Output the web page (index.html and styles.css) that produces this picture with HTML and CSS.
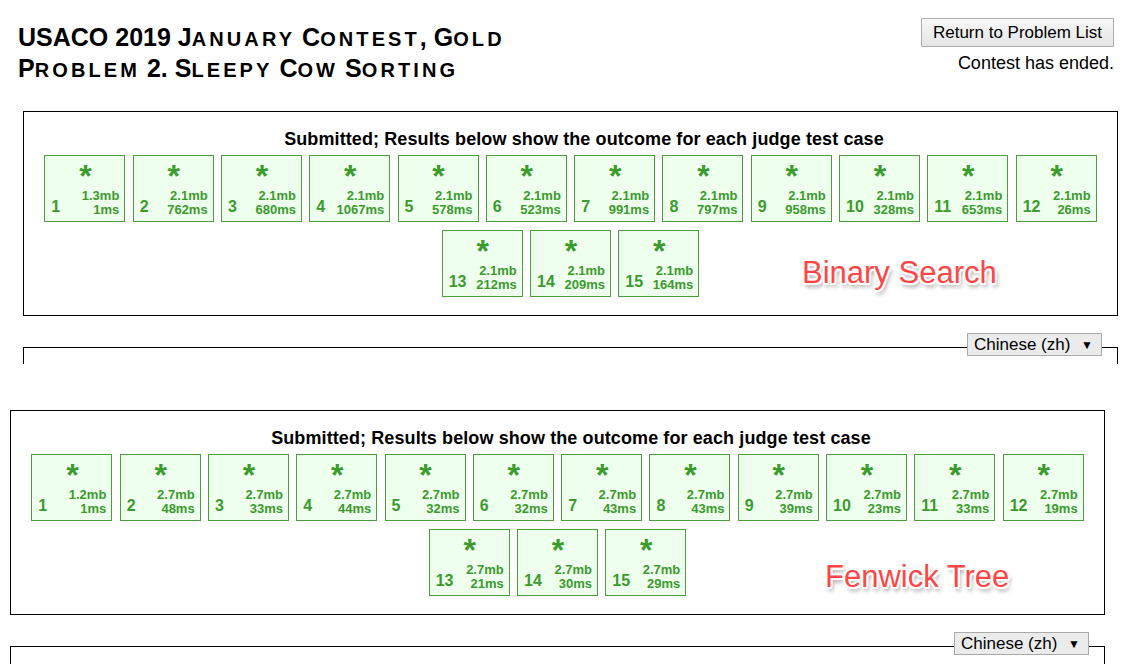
FILE: index.html
```html
<!DOCTYPE html>
<html>
<head>
<meta charset="utf-8">
<title>USACO 2019 January Contest, Gold</title>
<link rel="stylesheet" href="styles.css">
</head>
<body>
<div class="shot shot-one">
  <header class="topbar">
    <h2 class="title">USACO 2019 J<span class="sc">anuary</span> C<span class="sc">ontest</span>, G<span class="sc">old</span><br>P<span class="sc">roblem</span> 2. S<span class="sc">leepy</span> C<span class="sc">ow</span> S<span class="sc">orting</span></h2>
    <div class="actions">
      <button class="btn" type="button">Return to Problem List</button>
      <div class="status">Contest has ended.</div>
    </div>
  </header>
  <section class="results results-one">
    <h3 class="results-head">Submitted; Results below show the outcome for each judge test case</h3>
    <div class="cases">
      <div class="case"><div class="star">*</div><div class="foot"><span class="num">1</span><div class="info"><span>1.3mb</span><span>1ms</span></div></div></div>
      <div class="case"><div class="star">*</div><div class="foot"><span class="num">2</span><div class="info"><span>2.1mb</span><span>762ms</span></div></div></div>
      <div class="case"><div class="star">*</div><div class="foot"><span class="num">3</span><div class="info"><span>2.1mb</span><span>680ms</span></div></div></div>
      <div class="case"><div class="star">*</div><div class="foot"><span class="num">4</span><div class="info"><span>2.1mb</span><span>1067ms</span></div></div></div>
      <div class="case"><div class="star">*</div><div class="foot"><span class="num">5</span><div class="info"><span>2.1mb</span><span>578ms</span></div></div></div>
      <div class="case"><div class="star">*</div><div class="foot"><span class="num">6</span><div class="info"><span>2.1mb</span><span>523ms</span></div></div></div>
      <div class="case"><div class="star">*</div><div class="foot"><span class="num">7</span><div class="info"><span>2.1mb</span><span>991ms</span></div></div></div>
      <div class="case"><div class="star">*</div><div class="foot"><span class="num">8</span><div class="info"><span>2.1mb</span><span>797ms</span></div></div></div>
      <div class="case"><div class="star">*</div><div class="foot"><span class="num">9</span><div class="info"><span>2.1mb</span><span>958ms</span></div></div></div>
      <div class="case"><div class="star">*</div><div class="foot"><span class="num">10</span><div class="info"><span>2.1mb</span><span>328ms</span></div></div></div>
      <div class="case"><div class="star">*</div><div class="foot"><span class="num">11</span><div class="info"><span>2.1mb</span><span>653ms</span></div></div></div>
      <div class="case"><div class="star">*</div><div class="foot"><span class="num">12</span><div class="info"><span>2.1mb</span><span>26ms</span></div></div></div>
      <div class="case"><div class="star">*</div><div class="foot"><span class="num">13</span><div class="info"><span>2.1mb</span><span>212ms</span></div></div></div>
      <div class="case"><div class="star">*</div><div class="foot"><span class="num">14</span><div class="info"><span>2.1mb</span><span>209ms</span></div></div></div>
      <div class="case"><div class="star">*</div><div class="foot"><span class="num">15</span><div class="info"><span>2.1mb</span><span>164ms</span></div></div></div>
    </div>
    <div class="note note-binary">Binary Search</div>
  </section>
  <fieldset class="lang lang-one">
    <legend class="lang-legend"><span class="lang-select"><span>Chinese (zh)</span><span class="arrow">▼</span></span></legend>
  </fieldset>
</div>

<div class="shot shot-two">
  <section class="results results-two">
    <h3 class="results-head">Submitted; Results below show the outcome for each judge test case</h3>
    <div class="cases">
      <div class="case"><div class="star">*</div><div class="foot"><span class="num">1</span><div class="info"><span>1.2mb</span><span>1ms</span></div></div></div>
      <div class="case"><div class="star">*</div><div class="foot"><span class="num">2</span><div class="info"><span>2.7mb</span><span>48ms</span></div></div></div>
      <div class="case"><div class="star">*</div><div class="foot"><span class="num">3</span><div class="info"><span>2.7mb</span><span>33ms</span></div></div></div>
      <div class="case"><div class="star">*</div><div class="foot"><span class="num">4</span><div class="info"><span>2.7mb</span><span>44ms</span></div></div></div>
      <div class="case"><div class="star">*</div><div class="foot"><span class="num">5</span><div class="info"><span>2.7mb</span><span>32ms</span></div></div></div>
      <div class="case"><div class="star">*</div><div class="foot"><span class="num">6</span><div class="info"><span>2.7mb</span><span>32ms</span></div></div></div>
      <div class="case"><div class="star">*</div><div class="foot"><span class="num">7</span><div class="info"><span>2.7mb</span><span>43ms</span></div></div></div>
      <div class="case"><div class="star">*</div><div class="foot"><span class="num">8</span><div class="info"><span>2.7mb</span><span>43ms</span></div></div></div>
      <div class="case"><div class="star">*</div><div class="foot"><span class="num">9</span><div class="info"><span>2.7mb</span><span>39ms</span></div></div></div>
      <div class="case"><div class="star">*</div><div class="foot"><span class="num">10</span><div class="info"><span>2.7mb</span><span>23ms</span></div></div></div>
      <div class="case"><div class="star">*</div><div class="foot"><span class="num">11</span><div class="info"><span>2.7mb</span><span>33ms</span></div></div></div>
      <div class="case"><div class="star">*</div><div class="foot"><span class="num">12</span><div class="info"><span>2.7mb</span><span>19ms</span></div></div></div>
      <div class="case"><div class="star">*</div><div class="foot"><span class="num">13</span><div class="info"><span>2.7mb</span><span>21ms</span></div></div></div>
      <div class="case"><div class="star">*</div><div class="foot"><span class="num">14</span><div class="info"><span>2.7mb</span><span>30ms</span></div></div></div>
      <div class="case"><div class="star">*</div><div class="foot"><span class="num">15</span><div class="info"><span>2.7mb</span><span>29ms</span></div></div></div>
    </div>
    <div class="note note-fenwick">Fenwick Tree</div>
  </section>
  <fieldset class="lang lang-two">
    <legend class="lang-legend"><span class="lang-select"><span>Chinese (zh)</span><span class="arrow">▼</span></span></legend>
  </fieldset>
</div>
</body>
</html>
```

FILE: styles.css
```css
html, body {
  margin: 0;
  padding: 0;
  background: #fff;
}

body {
  font-family: "Liberation Sans", Arial, sans-serif;
  color: #000;
  width: 1145px;
  height: 664px;
  overflow: hidden;
}

.shot {
  overflow: hidden;
}

.shot-one {
  height: 364px;
}

.shot-two {
  margin-top: 46px;
  height: 254px;
}

/* header */
.topbar {
  box-sizing: border-box;
  height: 111px;
  padding: 18px 31px 0 18px;
  display: flex;
  justify-content: space-between;
  align-items: flex-start;
}

.title {
  margin: 5px 0 0 0;
  font-size: 25px;
  line-height: 29px;
  font-weight: bold;
  white-space: nowrap;
}

.sc {
  text-transform: uppercase;
  font-size: 0.8em;
  letter-spacing: 3.1px;
}

.actions {
  display: flex;
  flex-direction: column;
  align-items: flex-end;
}

.btn {
  box-sizing: border-box;
  height: 29px;
  width: 193px;
  margin: 0;
  padding: 0 8px;
  font-family: "Liberation Sans", Arial, sans-serif;
  font-size: 17px;
  color: #000;
  border: 1px solid #adadad;
  border-radius: 1px;
  background: linear-gradient(#f7f7f7, #e5e5e5);
}

.status {
  margin-top: 6px;
  font-size: 18px;
  line-height: 20px;
}

/* result box */
.results {
  position: relative;
  box-sizing: border-box;
  width: 1095px;
  height: 205px;
  border: 1px solid #000;
  padding-top: 17px;
}

.results-one {
  margin-left: 23px;
}

.results-two {
  margin-left: 10px;
}

.results-head {
  margin: 0 0 5px 0;
  padding-left: 27px;
  text-align: center;
  font-size: 18px;
  line-height: 21px;
  font-weight: bold;
  letter-spacing: 0.1px;
  white-space: nowrap;
}

.cases {
  display: flex;
  flex-wrap: wrap;
  justify-content: center;
  column-gap: 7.3px;
  row-gap: 8px;
}

.case {
  box-sizing: border-box;
  width: 81px;
  height: 67px;
  border: 1px solid #4c9e3c;
  background: #efe;
  color: #3c9a2e;
  font-weight: bold;
  display: flex;
  flex-direction: column;
  padding: 0 5px 4px 6px;
}

.star {
  text-align: center;
  font-size: 32px;
  line-height: 22px;
  height: 22px;
  margin-top: 9px;
}

.foot {
  margin-top: auto;
  display: flex;
  justify-content: space-between;
  align-items: flex-end;
}

.num {
  font-size: 16px;
  line-height: 16px;
  margin-bottom: 2px;
}

.info {
  display: flex;
  flex-direction: column;
  align-items: flex-end;
  font-size: 13px;
  line-height: 14px;
}

/* annotations drawn over the screenshot */
.note {
  position: absolute;
  font-size: 31px;
  line-height: 31px;
  color: #ff4646;
  white-space: nowrap;
  text-shadow:
    2px 0 0 #fff, -2px 0 0 #fff, 0 2px 0 #fff, 0 -2px 0 #fff,
    1.5px 1.5px 0 #fff, -1.5px -1.5px 0 #fff, 1.5px -1.5px 0 #fff, -1.5px 1.5px 0 #fff,
    2px 4px 4px rgba(0, 0, 0, 0.45);
}

.note-binary {
  left: 778px;
  top: 145px;
}

.note-fenwick {
  left: 814px;
  top: 150px;
}

/* language fieldset */
.lang {
  box-sizing: border-box;
  width: 1095px;
  height: 200px;
  margin: 17px 0 0 0;
  padding: 0 15px;
  border: 1px solid #000;
  min-width: 0;
}

.lang-one {
  margin-left: 23px;
}

.lang-two {
  margin-left: 10px;
}

.lang-legend {
  margin-left: auto;
  padding: 0;
  height: 28px;
}

.lang-select {
  box-sizing: border-box;
  display: flex;
  align-items: center;
  justify-content: space-between;
  width: 135px;
  height: 23px;
  padding: 0 8px 0 6px;
  border: 1px solid #a9a9a9;
  background: #ebebeb;
  font-size: 17px;
  color: #000;
}

.arrow {
  font-size: 12px;
}
```
